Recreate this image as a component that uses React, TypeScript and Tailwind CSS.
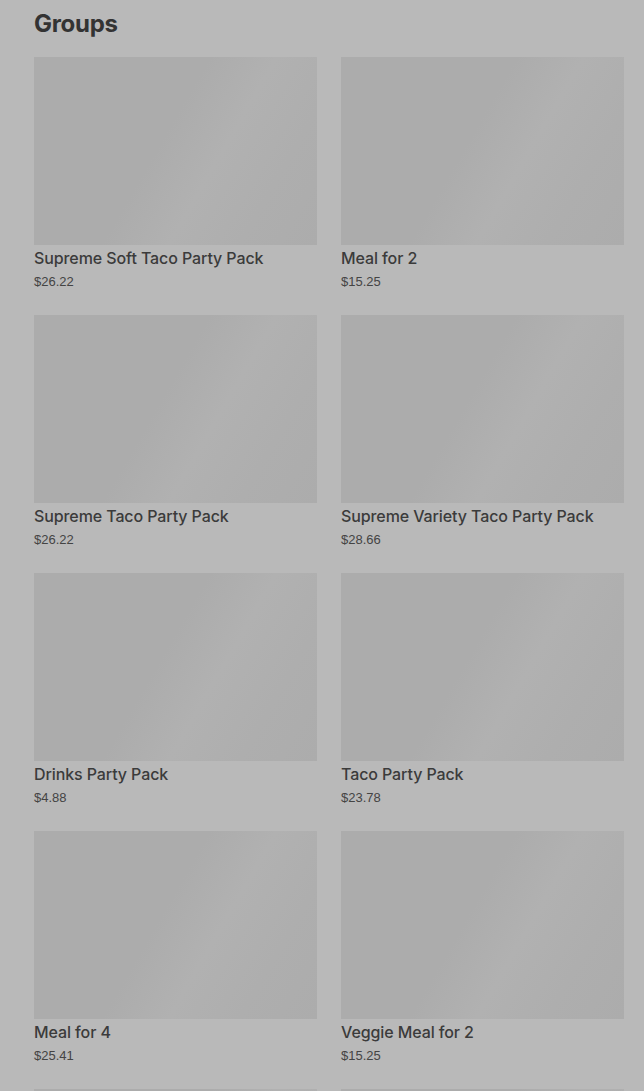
const groups = [
  { name: 'Supreme Soft Taco Party Pack', price: '$26.22' },
  { name: 'Meal for 2', price: '$15.25' },
  { name: 'Supreme Taco Party Pack', price: '$26.22' },
  { name: 'Supreme Variety Taco Party Pack', price: '$28.66' },
  { name: 'Drinks Party Pack', price: '$4.88' },
  { name: 'Taco Party Pack', price: '$23.78' },
  { name: 'Meal for 4', price: '$25.41' },
  { name: 'Veggie Meal for 2', price: '$15.25' },
];

function Thumb() {
  return (
    <div className="h-[188px] w-full bg-[linear-gradient(120deg,#acacac_0%,#acacac_45%,#b1b1b1_62%,#aeaeae_80%,#acacac_100%)]" />
  );
}

function GroupCard({ name, price }: { name: string; price: string }) {
  return (
    <div className="flex flex-col">
      <Thumb />
      <p
        className="mt-[1px] text-[16px] leading-[24px] font-medium text-[#3b3b3b] tracking-[-0.1px]"
        style={{ fontFamily: 'Inter, "Liberation Sans", sans-serif' }}
      >
        {name}
      </p>
      <p className="mt-[1px] text-[13px] leading-[22px] text-[#444444]">{price}</p>
    </div>
  );
}

export default function App() {
  return (
    <div
      className="h-[1091px] overflow-hidden bg-[#b9b9b9] pl-[34px] pr-[20px]"
      style={{ fontFamily: '"Liberation Sans", Arial, sans-serif' }}
    >
      <h2
        className="pt-[8px] text-[24px] leading-[32px] font-bold text-[#333333] tracking-[-0.3px]"
        style={{ fontFamily: 'Inter, "Liberation Sans", sans-serif' }}
      >
        Groups
      </h2>
      <div className="mt-[17px] grid grid-cols-2 gap-x-[24px] gap-y-[22px]">
        {groups.map((g) => (
          <GroupCard key={g.name} name={g.name} price={g.price} />
        ))}
        <Thumb />
        <Thumb />
      </div>
    </div>
  );
}
